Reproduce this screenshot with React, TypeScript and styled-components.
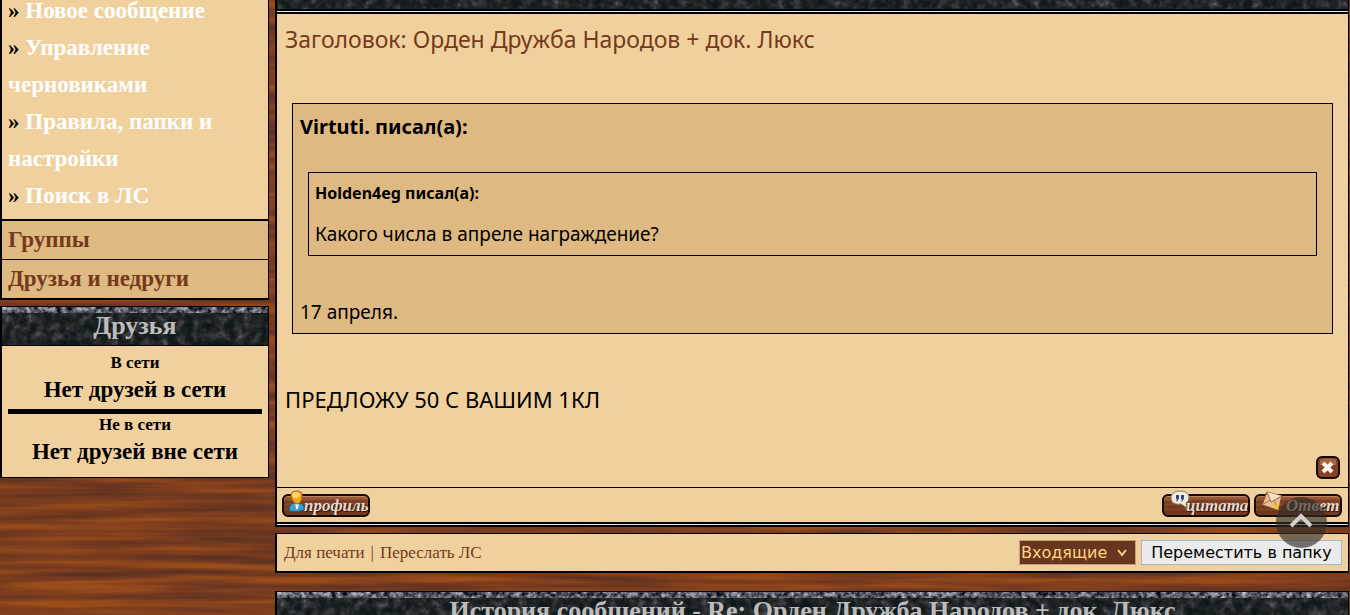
import React from "react";
import styled, { createGlobalStyle } from "styled-components";

const GlobalStyle = createGlobalStyle`
  * { box-sizing: border-box; }
  html, body { margin: 0; background: #78401f; }
  body { height: 100vh; overflow: hidden; }
  a { color: inherit; text-decoration: none; }
  p, h1, h2, h3, ul, dl, dd, blockquote { margin: 0; padding: 0; }
`;

const serif = `"Liberation Serif", "Palatino Linotype", serif`;
const sans = `"Noto Sans", "Trebuchet MS", sans-serif`;
const ui = `"DejaVu Sans", Verdana, sans-serif`;

const Texture = styled.svg`
  position: absolute;
  inset: 0;
  width: 100%;
  height: 100%;
  z-index: -1;
`;

const Page = styled.div`
  position: relative;
  isolation: isolate;
  height: 100vh;
  overflow: hidden;
  display: grid;
  grid-template-columns: 269px minmax(0, 1fr);
  gap: 6px;
  align-items: start;
  padding-right: 1px;
`;

const Column = styled.div`
  display: flex;
  flex-direction: column;
`;

const Panel = styled.section`
  border: 1px solid #000;
  border-left-width: 2px;
  background: #f0d19e;
`;

const SideMenu = styled(Panel)`
  margin: -8px 0 6px;
  border-top: 0;
  border-bottom-width: 2px;
  font: bold 23px/37px ${serif};
`;

const SubItems = styled.ul`
  list-style: none;
  padding: 0 6px 5px;
  color: #000;
  border-bottom: 2px solid #000;
  a { color: #fff; }
`;

const MenuLink = styled.a`
  display: block;
  padding: 0 6px;
  line-height: 38px;
  color: #743a1b;
  background: #dfb982;
  & + & { border-top: 1px solid #000; }
`;

const StoneBar = styled.h2<{ $cut?: boolean }>`
  position: relative;
  isolation: isolate;
  height: ${(p) => (p.$cut ? 9 : 38)}px;
  overflow: hidden;
  background: #101a1a;
  color: #bcbcbc;
  text-align: center;
  font: bold 26px/38px ${serif};
`;

const FriendsBody = styled.div`
  border-top: 1px solid #000;
  padding: 6px 6px 9px;
  text-align: center;
  font: bold 23px/32px ${serif};
  color: #000;
  h3 { font-size: 17px; line-height: 22px; }
`;

const Divider = styled.hr`
  margin: 3px 0 0;
  border: 0;
  height: 5px;
  background: #000;
`;

const DoubleRule = styled.div`
  height: 5px;
  border: solid #000;
  border-width: 2px 0;
  background: #e4e4e4;
`;

const Message = styled(Panel)`
  border-top: 0;
  border-bottom: 0;
  margin-bottom: 6px;
`;

const MessageBody = styled.article`
  display: flex;
  flex-direction: column;
  padding: 8px 8px 7px;
  color: #000;
  font: 22px/34px ${sans};
`;

const Subject = styled.h1`
  font: 23px/34px ${sans};
  color: #743a1b;
`;

const Quote = styled.blockquote`
  margin: 47px 7px 48px;
  border: 1px solid #000;
  background: #dfb982;
  padding: 7px 7px 5px;
  font: 19px/32px ${sans};
  cite { display: block; font-style: normal; font-weight: bold; font-size: 20px; }
`;

const InnerQuote = styled(Quote)`
  margin: 29px 8px 40px;
  padding: 4px 6px 5px;
  cite { font-size: 16px; margin-bottom: 9px; }
`;

const IconButton = styled.button`
  align-self: flex-end;
  margin-top: 40px;
  padding: 0;
  border: 0;
  width: 24px;
  height: 24px;
  background: none;
  svg { display: block; }
`;

const Actions = styled.div`
  display: flex;
  align-items: flex-end;
  gap: 4px;
  height: 35px;
  padding: 0 6px 5px 5px;
  border-top: 1px solid #000;
  & > :nth-child(2) { margin-left: auto; }
`;

const WoodButton = styled.button<{ $start: number }>`
  position: relative;
  width: 88px;
  height: 23px;
  padding: 0 0 0 ${(p) => p.$start}px;
  border: 2px solid #160b06;
  border-radius: 6px;
  background: repeating-linear-gradient(179deg, rgba(60, 20, 5, 0.25) 0 1px, transparent 3px 5px),
    linear-gradient(#a06040, #87482a 30%, #74391e);
  box-shadow: inset 0 1px 1px #c28a68;
  color: #e2dcd6;
  font: italic bold 17px/19px ${serif};
  text-align: left;
  white-space: nowrap;
  text-shadow: 1px 1px 1px #2a140b;
  svg { position: absolute; left: 3px; top: -6px; }
`;

const Tools = styled(Panel)`
  display: flex;
  align-items: center;
  justify-content: space-between;
  height: 40px;
  margin-bottom: 18px;
  padding: 0 6px 0 7px;
  border-bottom-width: 2px;
`;

const Links = styled.nav`
  display: flex;
  gap: 6px;
  font: 17px/24px ${serif};
  color: #743a1b;
`;

const MoveForm = styled.form`
  display: flex;
  gap: 5px;
`;

const SelectWrap = styled.label`
  position: relative;
  svg { position: absolute; right: 8px; top: 8px; pointer-events: none; }
`;

const FolderSelect = styled.select`
  appearance: none;
  display: block;
  width: 117px;
  height: 25px;
  padding: 0 1px;
  border: 1px solid #c79c6e;
  border-radius: 0;
  background: #683620;
  color: #ffd57c;
  font: 16px/22px ${ui};
`;

const MoveButton = styled.button`
  width: 201px;
  height: 25px;
  padding: 0;
  border: 1px solid #a5b6c9;
  background: #ebebeb;
  color: #000;
  font: 16px/22px ${ui};
  white-space: nowrap;
`;

const ToTop = styled.button`
  position: absolute;
  right: 23px;
  bottom: 67px;
  width: 51px;
  height: 51px;
  padding: 0 2px 3px 0;
  border: 0;
  border-radius: 50%;
  background: rgba(50, 45, 40, 0.65);
  svg { display: block; margin: 0 auto; }
`;

const Wood = () => (
  <Texture aria-hidden="true">
    <filter id="wood" x="0" y="0" width="100%" height="100%" colorInterpolationFilters="sRGB">
      <feTurbulence type="fractalNoise" baseFrequency="0.006 0.13" numOctaves={3} seed={8} />
      <feColorMatrix values="1 0 0 0 0  1 0 0 0 0  1 0 0 0 0  0 0 0 0 1" />
      <feComponentTransfer>
        <feFuncR type="table" tableValues=".28 .38 .49 .60 .66" />
        <feFuncG type="table" tableValues=".16 .20 .24 .30 .33" />
        <feFuncB type="table" tableValues=".15 .13 .12 .10 .11" />
      </feComponentTransfer>
    </filter>
    <rect width="100%" height="100%" filter="url(#wood)" />
  </Texture>
);

const Stone = ({ id, lip }: { id: string; lip?: boolean }) => (
  <Texture aria-hidden="true">
    <filter id={id} x="0" y="0" width="100%" height="100%" colorInterpolationFilters="sRGB">
      <feTurbulence type="fractalNoise" baseFrequency="0.12" numOctaves={5} seed={3} />
      <feColorMatrix values="1.2 0 0 0 -.1  1.2 0 0 0 -.1  1.2 0 0 0 -.1  0 0 0 0 1" />
      <feComponentTransfer>
        <feFuncR type="table" tableValues=".05 .06 .12 .22 .40" />
        <feFuncG type="table" tableValues=".09 .10 .14 .23 .41" />
        <feFuncB type="table" tableValues=".09 .10 .14 .24 .44" />
      </feComponentTransfer>
    </filter>
    <filter id={`${id}-lip`} x="0" y="0" width="100%" height="100%" colorInterpolationFilters="sRGB">
      <feTurbulence type="fractalNoise" baseFrequency="0.2" numOctaves={4} seed={5} />
      <feColorMatrix values="1.2 0 0 0 -.25  1.2 0 0 0 -.24  1.2 0 0 0 -.2  0 0 0 0 1" />
    </filter>
    <rect width="100%" height="100%" filter={`url(#${id})`} />
    {lip && <rect width="100%" height="6" filter={`url(#${id}-lip)`} />}
  </Texture>
);

const ProfileIcon = () => (
  <svg width="19" height="22" viewBox="0 0 19 22" aria-hidden="true">
    <path d="M2 21Q2 14 7 13L13 13Q18 15 17 20Q10 23 2 21Z" fill="#3d9fce" stroke="#1b5a80" />
    <path d="M8 12L12 12L11 19L9 19Z" fill="#f4f8fb" />
    <path d="M4 5Q4 1 10 1Q16 1 15 6Q15 13 10 14Q5 13 4 5Z" fill="#f3a51f" stroke="#a9640d" />
    <ellipse cx="9" cy="5" rx="4" ry="3" fill="#ffd365" />
  </svg>
);

const QuoteIcon = () => (
  <svg width="26" height="20" viewBox="0 0 26 20" aria-hidden="true">
    <path d="M13 1C20 1 22 4 22 8Q22 11 19 13L20 18L14 14C7 15 4 12 4 8C4 4 7 1 13 1Z" fill="#f1ecd9" stroke="#80745d" />
    <path d="M9 5h3v3q0 2-3 4l1-3H9zM14 5h3v3q0 2-3 4l1-3h-1z" fill="#34408e" />
  </svg>
);

const ReplyIcon = () => (
  <svg width="24" height="22" viewBox="0 0 24 22" aria-hidden="true">
    <path d="M8 2L23 6L19 20L3 15Z" fill="#e9bd91" stroke="#79482b" />
    <path d="M8 2L12 12L23 6" fill="#f9dfc7" stroke="#9c6340" />
    <path d="M3 15L11 10M19 20L15 10" stroke="#ae7249" fill="none" />
    <path d="M11 17L19 20L21 13Z" fill="#efc54b" opacity=".8" />
  </svg>
);

const DeleteIcon = () => (
  <svg width="24" height="24" viewBox="0 0 24 24" aria-hidden="true">
    <rect x="1" y="1" width="22" height="21" rx="5" fill="#864223" stroke="#160b06" strokeWidth="2" />
    <path d="M4 4Q12 1 20 4V9H4Z" fill="#a86541" />
    <path d="M7 7L16 16M16 7L7 16" stroke="#f7f1ed" strokeWidth="4" />
  </svg>
);

export default function App() {
  return (
    <>
      <GlobalStyle />
      <Page>
        <Wood />
        <Column as="aside">
          <SideMenu as="nav">
            <SubItems>
              <li>» <a href="#compose">Новое сообщение</a></li>
              <li>» <a href="#drafts">Управление черновиками</a></li>
              <li>» <a href="#rules">Правила, папки и настройки</a></li>
              <li>» <a href="#search">Поиск в ЛС</a></li>
            </SubItems>
            <MenuLink href="#groups">Группы</MenuLink>
            <MenuLink href="#friends">Друзья и недруги</MenuLink>
          </SideMenu>
          <Panel>
            <StoneBar><Stone id="stone-friends" lip />Друзья</StoneBar>
            <FriendsBody>
              <h3>В сети</h3>
              <p>Нет друзей в сети</p>
              <Divider />
              <h3>Не в сети</h3>
              <p>Нет друзей вне сети</p>
            </FriendsBody>
          </Panel>
        </Column>
        <Column as="main">
          <Message>
            <StoneBar as="div" $cut><Stone id="stone-top" /></StoneBar>
            <DoubleRule />
            <MessageBody>
              <Subject>Заголовок: Орден Дружба Народов + док. Люкс</Subject>
              <Quote>
                <cite>Virtuti. писал(а):</cite>
                <InnerQuote>
                  <cite>Holden4eg писал(а):</cite>
                  <p>Какого числа в апреле награждение?</p>
                </InnerQuote>
                <p>17 апреля.</p>
              </Quote>
              <p>ПРЕДЛОЖУ 50 С ВАШИМ 1КЛ</p>
              <IconButton type="button" aria-label="Удалить"><DeleteIcon /></IconButton>
            </MessageBody>
            <Actions>
              <WoodButton type="button" $start={20}><ProfileIcon />профиль</WoodButton>
              <WoodButton type="button" $start={22}><QuoteIcon />цитата</WoodButton>
              <WoodButton type="button" $start={30}><ReplyIcon />Ответ</WoodButton>
            </Actions>
            <DoubleRule />
          </Message>
          <Tools>
            <Links>
              <a href="#print">Для печати</a>
              <span>|</span>
              <a href="#forward">Переслать ЛС</a>
            </Links>
            <MoveForm>
              <SelectWrap>
                <FolderSelect aria-label="Папка"><option>Входящие</option></FolderSelect>
                <svg width="12" height="10" viewBox="0 0 12 10" fill="none" stroke="#ffd57c" strokeWidth="2" aria-hidden="true">
                  <path d="M2 2L6 7L10 2" />
                </svg>
              </SelectWrap>
              <MoveButton type="button">Переместить в папку</MoveButton>
            </MoveForm>
          </Tools>
          <Panel>
            <StoneBar><Stone id="stone-history" lip />История сообщений - Re: Орден Дружба Народов + док. Люкс</StoneBar>
          </Panel>
        </Column>
        <ToTop type="button" aria-label="Наверх">
          <svg width="24" height="16" viewBox="0 0 24 16" fill="none" stroke="#d6d0ca" strokeWidth="4" aria-hidden="true">
            <path d="M2 13L12 3L22 13" />
          </svg>
        </ToTop>
      </Page>
    </>
  );
}
